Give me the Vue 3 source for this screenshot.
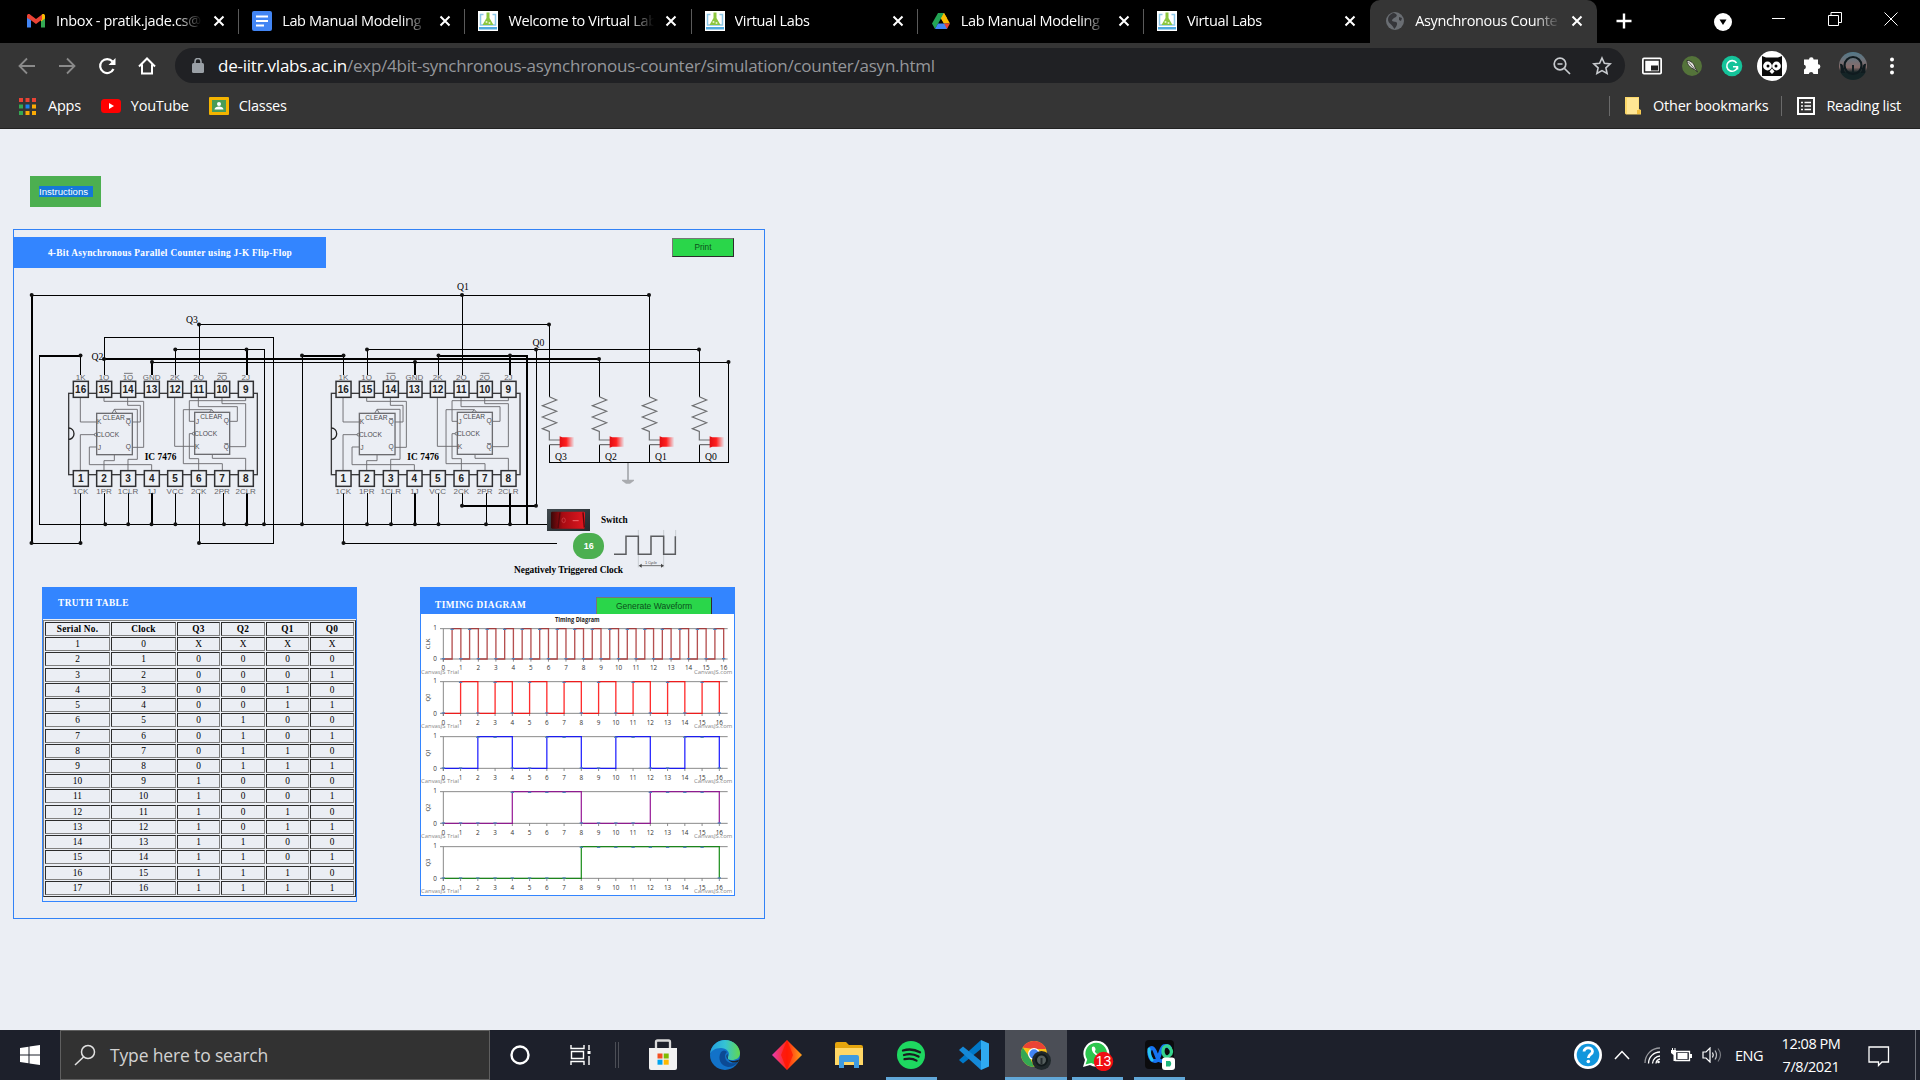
<script setup>
const tabs = [
  { title: 'Inbox - pratik.jade.cs@', icon: 'gmail' },
  { title: 'Lab Manual Modeling', icon: 'docs' },
  { title: 'Welcome to Virtual Lab', icon: 'vlabs' },
  { title: 'Virtual Labs', icon: 'vlabs' },
  { title: 'Lab Manual Modeling', icon: 'drive' },
  { title: 'Virtual Labs', icon: 'vlabs' },
  { title: 'Asynchronous Counte', icon: 'globe', active: true },
]

const head = ['Serial No.', 'Clock', 'Q3', 'Q2', 'Q1', 'Q0']
const rows = Array.from({ length: 17 }, (_, i) => {
  const bits = i === 0 ? ['X', 'X', 'X', 'X'] : (i - 1).toString(2).padStart(4, '0').split('')
  return [i + 1, i, ...bits]
})

const thin = [
  'M32 295.5H649.5V397', 'M32 543.5H80.5V493', 'M39.5 356V524.5H547', 'M80.5 356V375',
  'M104.5 375V337.5H273.5V543.5H199.5V493', 'M152 362.5H728.5V462.5H549.5V445',
  'M175.5 375V349.5H264.5V524.5', 'M199.5 375V324.5H549.5V397', 'M302.5 356V524.5', 'M343.5 356V375',
  'M367.5 375V349.5H699.5V397', 'M438.5 356V375', 'M462.5 295V375', 'M536.5 349V506', 'M462.5 493V506',
  'M343.5 493V543.5H557', 'M599.5 359V397', 'M599.5 445V462', 'M649.5 445V462', 'M699.5 445V462',
  'M104.5 493V524', 'M128.5 493V524', 'M175.5 493V524', 'M223.5 493V524',
  'M367.5 493V524', 'M391.5 493V524', 'M438.5 493V524', 'M486.5 493V524',
].join('')
const thick = [
  'M32 295V543', 'M39 356H80.5', 'M104 359H599.5', 'M152 362V375', 'M247 349V375', 'M302 356H343.5',
  'M415 362V375', 'M438 356H527V524', 'M510 356V375', 'M462 506H536.5',
  'M152 493V524', 'M247 493V524', 'M415 493V524', 'M510 493V524',
].join('')
const dots = [
  [31.7, 295], [31.5, 543], [80.5, 543], [199, 543], [80.5, 355.5], [199, 324.5], [104, 359], [152, 362],
  [175.3, 349.5], [246.5, 349.5], [302, 355.5], [343.5, 355.5], [367, 349.5], [343.5, 543], [462, 295],
  [549, 324.5], [536, 349.5], [438.5, 355.5], [510, 355.5], [415, 362], [462, 505.7], [536, 505.7],
  [649, 295], [699, 349.5], [599, 359], [728.5, 362],
  ...[105.3, 128.2, 151.5, 175.4, 224, 246.5, 264, 302, 367, 391, 415, 438.5, 486, 510].map(x => [x, 524.3]),
]
const wireLabels = [
  ['Q1', 457, 290], ['Q3', 186, 323], ['Q2', 91.5, 360], ['Q0', 532.5, 346],
  ['Q3', 555, 460], ['Q2', 605, 460], ['Q1', 655, 460], ['Q0', 705, 460],
]

const pinX = [242, 312, 384, 455, 525, 596, 666, 737]
const topPins = ['1K', '1Q', '1Q', 'GND', '2K', '2Q', '2Q', '2J']
const topBar = [0, 0, 1, 0, 0, 0, 1, 0]
const bottomPins = ['1CK', '1PR', '1CLR', '1J', 'VCC', '2CK', '2PR', '2CLR']
const chipText = [
  ['CLEAR', 341, 209], ['CLOCK', 323, 261], ['K', 298, 223], ['Q', 385, 222], ['J', 298, 299], ['Q', 385, 297],
  ['CLEAR', 634, 208], ['CLOCK', 617, 259], ['J', 592, 221], ['Q', 679, 220], ['K', 592, 297], ['Q', 679, 297],
]

const square = (step, period, top, bottom, end) => {
  let d = `M100 ${bottom}`
  let level = 0
  for (let t = period; t <= end; t += period) {
    d += `H${(100 + t * step).toFixed(1)}`
    level = 1 - level
    if (t < end || !level) d += `V${level ? top : bottom}`
  }
  return d
}
const charts = [
  { name: 'CLK', color: '#a52a2a', top: 146, bottom: 237, step: 52.56, period: 0.5 },
  { name: 'Q0', color: '#ff0000', top: 305, bottom: 400, step: 51.75, period: 1 },
  { name: 'Q1', color: '#0000ff', top: 470, bottom: 565, step: 51.75, period: 2 },
  { name: 'Q2', color: '#8b008b', top: 635, bottom: 730, step: 51.75, period: 4 },
  { name: 'Q3', color: '#008000', top: 800, bottom: 895, step: 51.75, period: 8 },
].map(c => {
  const marks = []
  const inc = c.period < 1 ? 0.5 : 1
  for (let t = 0; t <= 16; t += inc) {
    const high = Math.floor(t / c.period) % 2 === 1
    marks.push([100 + t * c.step, high ? c.top + 2 : c.bottom - 1])
  }
  return { ...c, d: square(c.step, c.period, c.top, c.bottom, 16), marks }
})
const ticks = Array.from({ length: 17 }, (_, i) => i)
</script>

<template>
  <div class="screen">
    <header class="tabs">
      <div v-for="(t, i) in tabs" :key="i" class="tab" :class="{ active: t.active, last: i === 5 }">
        <svg class="fav" viewBox="0 0 20 20">
          <g v-if="t.icon === 'gmail'">
            <path d="M1 5v11.5h4V9z" fill="#4285f4" /><path d="M19 5v11.5h-4V9z" fill="#34a853" />
            <path d="M15 5.500v5L19 7.500V5c0-2-2-2.500-3-1.500z" fill="#fbbc04" />
            <path d="M1 5c0-2 2-2.500 3-1.500l6 4.500 6-4.500v5L10 13 4 8.500 1 7z" fill="#ea4335" />
          </g>
          <g v-else-if="t.icon === 'docs'">
            <rect width="20" height="20" rx="2" fill="#4285f4" />
            <path d="M4 5.500h12M4 10h12M4 14.500h8" stroke="#fff" stroke-width="2" />
          </g>
          <g v-else-if="t.icon === 'vlabs'">
            <rect width="20" height="20" fill="#fff" />
            <path d="M5.500 3.500H2.500V14h15V3.500h-3" fill="none" stroke="#8cc7e8" stroke-width="1.500" />
            <path d="M1 16h18v2.500H1z" fill="#4fa8dc" />
            <path d="M8.500 1.500h3V7l4 7h-11l4-7z" fill="#8cc63f" /><circle cx="8.500" cy="11" r="1" fill="#e6f5c8" /><circle cx="11.500" cy="12" r="1" fill="#e6f5c8" />
          </g>
          <g v-else-if="t.icon === 'drive'">
            <path d="M7 2h6l6 10.500h-6z" fill="#fbbc04" /><path d="M7 2h6l-3 5.500L4 18 1 12.500z" fill="#23a455" />
            <path d="M4 18l3-5.500h8.500L16 18z" fill="#4285f4" /><path d="M10 7.500l3-5.500 3 5.200-3 5.300z" fill="#fbbc04" /><path d="M13 12.500h6L16 18z" fill="#ea4335" />
          </g>
          <g v-else>
            <circle cx="10" cy="10" r="9" fill="#6a6e73" />
            <path d="M9 2c3 1 4 3 1 4.500S6 10 8.500 10.500s4 .5 3.500 3-2 3-2.500 4.500C8 16 7 14 5 12.500S2.500 8 3.500 6 7 2 9 2zM14 6l3 1-1 3-2-1z" fill="#35363a" />
          </g>
        </svg>
        <span class="ttl">{{ t.title }}</span>
        <svg class="x" viewBox="0 0 12 12"><path d="M1.500 1.500l9 9M10.500 1.500l-9 9" stroke="#fff" stroke-width="2" /></svg>
      </div>
      <svg class="plus" viewBox="0 0 16 16"><path d="M8 .5v15M.5 8h15" stroke="#fff" stroke-width="2.400" /></svg>
      <div class="winctl">
        <svg width="18" height="18" viewBox="0 0 18 18" class="drop"><circle cx="9" cy="9" r="9" fill="#fff" /><path d="M5.500 6.500h7L9 12z" fill="#000" /></svg>
        <svg width="14" height="14" viewBox="0 0 14 14"><path d="M0 6.500h13" stroke="#fff" /></svg>
        <svg width="14" height="14" viewBox="0 0 14 14" fill="none" stroke="#fff"><path d="M.5 3.500h10v10H.5zM3 3V.5h10.500v10H11" /></svg>
        <svg width="14" height="14" viewBox="0 0 14 14"><path d="M.5.5l13 13M13.500.5l-13 13" stroke="#fff" /></svg>
      </div>
    </header>

    <div class="toolbar">
      <div class="nav">
        <svg width="18" height="18" viewBox="0 0 18 18" fill="none" stroke="#8a8a8a" stroke-width="1.800"><path d="M17 9H2M9 1.500L1.500 9 9 16.500" /></svg>
        <svg width="18" height="18" viewBox="0 0 18 18" fill="none" stroke="#8a8a8a" stroke-width="1.800"><path d="M1 9h15M9 1.500L16.500 9 9 16.500" /></svg>
        <svg width="18" height="18" viewBox="0 0 18 18" fill="none" stroke="#fff" stroke-width="2.200"><path d="M15.500 12A7 7 0 1 1 14.500 4.500" /><path d="M17.500 1v7h-7z" fill="#fff" stroke="none" /></svg>
        <svg width="18" height="18" viewBox="0 0 18 18" fill="none" stroke="#fff" stroke-width="2"><path d="M1 9.500L9 1.500l8 8M4 7.500v9h10v-9" /></svg>
      </div>
      <div class="omni">
        <svg class="lock" width="12" height="15" viewBox="0 0 12 15"><rect y="5" width="12" height="10" rx="1.500" fill="#9aa0a6" /><path d="M3 6V3.500a3 3 0 0 1 6 0V6" fill="none" stroke="#9aa0a6" stroke-width="1.600" /></svg>
        <span class="url">de-iitr.vlabs.ac.in<i>/exp/4bit-synchronous-asynchronous-counter/simulation/counter/asyn.html</i></span>
        <svg width="18" height="18" viewBox="0 0 18 18" fill="none" stroke="#c8cbcf" stroke-width="1.700"><circle cx="7" cy="7" r="5.800" /><path d="M4.500 7h5M11.500 11.500l5.500 5.500" /></svg>
        <svg width="20" height="20" viewBox="0 0 20 20" fill="none" stroke="#c8cbcf" stroke-width="1.600"><path d="M10 2l2.400 5.300 5.800.6-4.300 3.900 1.200 5.700L10 14.600l-5.100 2.900 1.200-5.700L1.800 7.900l5.800-.6z" /></svg>
      </div>
      <div class="ext">
        <svg width="22" height="20" viewBox="0 0 22 20"><rect x="1" y="1.500" width="20" height="17" rx="2" fill="#fff" /><path d="M3.500 4h15v12h-15z" fill="none" stroke="#222" stroke-width="1.500" /><path d="M10 9.500h7v5h-7z" fill="#222" /></svg>
        <svg width="22" height="22" viewBox="0 0 22 22"><circle cx="11" cy="11" r="10" fill="#54733a" /><path d="M6 5.500c4 0 7 3 8 7l2.500 4.500-3-2.500C9.500 13 6 9.500 6 5.500z" fill="#e8e8e0" stroke="#222" stroke-width=".8" /><path d="M7.500 7l6 7" stroke="#333" stroke-width=".7" /></svg>
        <svg width="22" height="22" viewBox="0 0 22 22"><circle cx="11" cy="11" r="10.300" fill="#15c39a" /><path d="M15.500 8a5.300 5.300 0 1 0 .8 3.800H12M16.500 14.500v-3" fill="none" stroke="#fff" stroke-width="1.600" /></svg>
        <svg width="30" height="30" viewBox="0 0 30 30"><circle cx="15" cy="15" r="15" fill="#fff" /><path d="M5 5l4 1.500h12L25 5v20H5z" fill="#0b0b0b" /><circle cx="10.500" cy="15" r="4.400" fill="#fff" /><circle cx="19.500" cy="15" r="4.400" fill="#fff" /><circle cx="11" cy="15" r="1.500" /><circle cx="19" cy="15" r="1.500" /><path d="M15 17.500l2.500 3L15 23l-2.500-2.500z" fill="#fff" /></svg>
        <svg width="20" height="20" viewBox="0 0 20 20"><path d="M7 3.500a2.300 2.300 0 0 1 4.600 0H16v4.700a2.400 2.400 0 0 1 0 4.800v5h-4.500a2.400 2.400 0 0 0-4.700 0H2v-4.600a2.400 2.400 0 0 0 0-4.700V3.500z" fill="#fff" /></svg>
        <svg width="28" height="28" viewBox="0 0 28 28"><defs><linearGradient id="sky" x2="0" y2="1"><stop stop-color="#52798a" /><stop offset=".55" stop-color="#866b69" /><stop offset=".72" stop-color="#142426" /></linearGradient></defs><circle cx="14" cy="14" r="14" fill="url(#sky)" /><circle cx="14" cy="13.500" r="8.500" fill="none" stroke="#101b1f" stroke-width="2.200" /><path d="M1 12c3-1 4 4 5 9H2zM27 12c-3-1-4 4-5 9h4z" fill="#101b1f" /><path d="M13 13h2v8h-2z" fill="#142024" /></svg>
        <svg width="6" height="18" viewBox="0 0 6 18" fill="#fff"><circle cx="3" cy="2.500" r="2" /><circle cx="3" cy="9" r="2" /><circle cx="3" cy="15.500" r="2" /></svg>
      </div>
    </div>

    <div class="bookmarks">
      <svg width="17" height="17" viewBox="0 0 17 17"><path d="M0 0h4v4H0zM6.500 0h4v4h-4zM13 0h4v4h-4z" fill="#ea4335" /><path d="M0 6.500h4v4H0zM0 13h4v4H0z" fill="#34a853" /><path d="M6.500 6.500h4v4h-4z" fill="#1a82f0" /><path d="M13 6.500h4v4h-4zM6.500 13h4v4h-4zM13 13h4v4h-4z" fill="#fbab05" /></svg>
      <span class="b1">Apps</span>
      <svg width="20" height="14" viewBox="0 0 20 14"><rect width="20" height="14" rx="3.500" fill="#f00" /><path d="M8 4v6l5-3z" fill="#fff" /></svg>
      <span class="b2">YouTube</span>
      <svg width="20" height="18" viewBox="0 0 20 18"><rect width="20" height="18" rx="1" fill="#f4b400" /><path d="M3 3h14v12H3z" fill="#4a9c58" /><circle cx="10" cy="7" r="2" fill="#fff" /><path d="M5.500 12.500c0-4 9-4 9 0z" fill="#fff" /></svg>
      <span class="b3">Classes</span>
      <div class="right">
        <i class="vr"></i>
        <svg width="16" height="18" viewBox="0 0 16 18"><path d="M0 0h14v12l2 1v4.500H1l-1-1z" fill="#fcd869" /><path d="M2 1h11.500v11L12 17H2z" fill="#ffe694" /><path d="M12 13h3.500v4H12z" fill="#f2bf3d" /></svg>
        <span class="b4">Other bookmarks</span>
        <i class="vr"></i>
        <svg width="18" height="18" viewBox="0 0 18 18"><path d="M1 1h16v16H1z" fill="none" stroke="#fff" stroke-width="2" /><path d="M4 5.500h2M4 9h2M4 12.500h2M7.500 5.500H14M7.500 9H14M7.500 12.500H14" stroke="#fff" stroke-width="1.500" /></svg>
        <span class="b5">Reading list</span>
      </div>
    </div>

    <main>
      <button class="instr"><span>Instructions</span></button>
      <section class="lab">
        <div class="labhead">
          <h1>4-Bit Asynchronous Parallel Counter using J-K Flip-Flop</h1>
          <button class="print">Print</button>
        </div>
        <svg class="circuit" width="750" height="318" viewBox="14 269 750 318">
          <defs>
            <linearGradient id="led"><stop stop-color="#e00d12" /><stop offset=".45" stop-color="#ff2020" /><stop offset="1" stop-color="#ff2020" stop-opacity="0" /></linearGradient>
            <linearGradient id="sw"><stop stop-color="#3a0808" /><stop offset=".35" stop-color="#a80b12" /><stop offset="1" stop-color="#e01720" /></linearGradient>
            <linearGradient id="case" x2="1" y2="1"><stop stop-color="#41494e" /><stop offset="1" stop-color="#22282c" /></linearGradient>
          </defs>
          <g fill="none" stroke="#000" shape-rendering="crispEdges"><path :d="thin" /><path :d="thick" stroke-width="2" /></g>
          <circle v-for="(p, i) in dots" :key="i" :cx="p[0]" :cy="p[1]" r="2" fill="#111" />
          <g v-for="off in [0, 262.700]" :key="off" :transform="`translate(${off} 350) scale(.33333)`" fill="none" stroke="#6c6c70" stroke-width="2.800">
            <rect x="206" y="130" width="566" height="244" stroke="#3a3a3c" stroke-width="4" />
            <path d="M206 234a16 17 0 0 1 0 34" stroke="#222" stroke-width="4" />
            <path d="M241 142V216H290M312 142V154H431V292H397M383 142V166H421V216H397M384 362V328H412V178H343L336 190M343 178l7 12M241 362V254H284M455 362V344H268V291H290M312 362V332H343V314" />
            <path d="M737 142V152H568V214H584M595 142V170H712V214H688M666 142V161H737V290H688M524 142V289H584M596 362V326H568V251H578M667 362V341H550V179H635L628 187M635 179l7 8M737 362V325H637V314" />
            <circle cx="287" cy="254" r="4" /><circle cx="581" cy="251" r="4" />
            <rect x="290" y="190" width="107" height="124" stroke-width="4" /><rect x="584" y="187" width="105" height="126" stroke-width="4" />
            <path d="M379 206h12M673 281h12" />
            <template v-for="(x, i) in pinX" :key="x">
              <rect :x="x - 22" y="94" width="45" height="48" fill="#eceff4" stroke="#303033" stroke-width="4.500" />
              <rect :x="x - 22" y="362" width="45" height="47" fill="#eceff4" stroke="#303033" stroke-width="4.500" />
              <g stroke="none" text-anchor="middle" class="arial">
                <text :x="x" y="128" class="num">{{ 16 - i }}</text><text :x="x" y="397" class="num">{{ i + 1 }}</text>
                <text :x="x" y="89" class="lbl">{{ topPins[i] }}</text><text :x="x" y="432" class="lbl">{{ bottomPins[i] }}</text>
              </g>
              <path v-if="topBar[i]" :d="`M${x - 12} 70h26`" />
            </template>
            <g stroke="none" class="arial in" text-anchor="middle"><text v-for="(c, i) in chipText" :key="i" :x="c[1]" :y="c[2]">{{ c[0] }}</text></g>
            <text x="434" y="330" textLength="95" stroke="none" class="ic">IC 7476</text>
          </g>
          <text v-for="(l, i) in wireLabels" :key="'w' + i" :x="l[1]" :y="l[2]" class="q">{{ l[0] }}</text>
          <g transform="translate(520 220) scale(.33333)">
            <g v-for="k in 4" :key="k" :transform="`translate(${(k - 1) * 150} 0)`">
              <path d="M88 530L110 540L67 557L110 574L67 591L110 608L67 626L88 634V660H120M88 674H122" fill="none" stroke="#6f7072" stroke-width="3.500" />
              <path d="M119 649l8 3h36v28h-36l-8 3z" fill="url(#led)" />
            </g>
            <path d="M324 729V780" stroke="#b0b3b8" stroke-width="6" /><path d="M306 779h36v3l-12 9h-12l-12-9z" fill="#a9abaf" />
            <rect x="81" y="867" width="129" height="66" fill="url(#case)" /><rect x="93" y="875" width="102" height="51" rx="4" fill="url(#sw)" />
            <path d="M120 877l-6 47M189 877l4 46" stroke="#55080c" stroke-width="4" /><ellipse cx="131" cy="901" rx="5" ry="7" fill="none" stroke="#d34b50" stroke-width="2" /><path d="M158 902h18" stroke="#f06a6c" stroke-width="3" />
            <text x="243" y="908" textLength="80" lengthAdjust="spacingAndGlyphs" class="bold">Switch</text>
            <rect x="159" y="939" width="93" height="78" rx="38" fill="#4caf50" />
            <text x="206" y="988" text-anchor="middle" class="sixteen">16</text>
            <path d="M355 930V1042M431 930V1042M467 930V950" stroke="#c3c6cb" stroke-width="2.500" />
            <path d="M282 1003H318V949H355V1003H393V949H431V1003H466V949" fill="none" stroke="#5b5c5f" stroke-width="4.500" />
            <path d="M360 1037h68" stroke="#555" stroke-width="2.500" /><path d="M356 1037l9-6v12zM432 1037l-9-6v12z" fill="#444" />
            <text x="393" y="1031" text-anchor="middle" textLength="36" class="tiny">1 Cycle</text>
            <text x="-18" y="1058" textLength="327" lengthAdjust="spacingAndGlyphs" class="bold">Negatively Triggered Clock</text>
          </g>
        </svg>
        <div class="panels">
          <div class="truth">
            <h2>TRUTH TABLE</h2>
            <div class="grid">
              <b v-for="h in head" :key="h">{{ h }}</b>
              <template v-for="(r, i) in rows" :key="i"><span v-for="(c, j) in r" :key="j">{{ c }}</span></template>
            </div>
          </div>
          <div class="timing">
            <div class="thead"><h2>TIMING DIAGRAM</h2><button>Generate Waveform</button></div>
            <svg width="313" height="281" viewBox="33 102 939 843" class="wave">
              <text x="435" y="127" textLength="134" lengthAdjust="spacingAndGlyphs" class="ct">Timing Diagram</text>
              <g v-for="c in charts" :key="c.name">
                <path :d="`M90 ${c.top}H953M90 ${c.bottom}H953M100 ${c.top}V${c.bottom + 8}`" stroke="#8a8a8a" stroke-width="3" />
                <path v-for="t in ticks" :key="t" :d="`M${100 + t * c.step} ${c.bottom}v8`" stroke="#777" stroke-width="2.500" />
                <path :d="c.d" fill="none" :stroke="c.color" stroke-opacity=".82" stroke-width="4" />
                <path v-for="(m, i) in c.marks" :key="'m' + i" :d="`M${m[0] - 5} ${m[1]}h10`" stroke="#4f81bc" stroke-width="4" />
                <text x="75" :y="c.top + 5" text-anchor="middle">1</text><text x="75" :y="c.bottom + 7" text-anchor="middle">0</text>
                <text v-for="t in ticks" :key="'t' + t" :x="100 + t * c.step" :y="c.bottom + 34" text-anchor="middle">{{ t }}</text>
                <text :transform="`translate(59 ${(c.top + c.bottom) / 2}) rotate(-90)`" text-anchor="middle" class="an">{{ c.name }}</text>
                <text x="33" :y="c.bottom + 44" textLength="114" lengthAdjust="spacingAndGlyphs" class="cr">CanvasJS Trial</text>
                <text x="852" :y="c.bottom + 44" textLength="115" lengthAdjust="spacingAndGlyphs" class="cr">CanvasJS.com</text>
              </g>
            </svg>
          </div>
        </div>
      </section>
    </main>

    <footer>
      <div class="start"><svg width="20" height="20" viewBox="0 0 20 20" fill="#fff"><path d="M0 3l8.500-1.300V9.500H0zM9.500 1.500L20 0v9.500H9.500zM0 10.500h8.500v7.800L0 17zM9.500 10.500H20V20L9.500 18.500z" /></svg></div>
      <div class="search"><svg width="22" height="22" viewBox="0 0 22 22" fill="none" stroke="#e2e2e2" stroke-width="1.500"><circle cx="14" cy="8" r="6.500" /><path d="M9.500 13L1 21" /></svg><span>Type here to search</span></div>
      <div class="slot c1"><svg width="20" height="20" viewBox="0 0 20 20"><circle cx="10" cy="10" r="8.500" fill="none" stroke="#fff" stroke-width="2.400" /></svg></div>
      <div class="slot c2"><svg width="22" height="20" viewBox="0 0 22 20" fill="none" stroke="#fff" stroke-width="1.400"><path d="M1 0v3.500h13V0M1 20v-3.500h13V20M1.500 6.500h12v7h-12zM19 0v5M19 11v9" /><path d="M17.500 6h3v3h-3z" fill="#fff" stroke="none" /></svg></div>
      <div class="dv"></div>
      <div class="slot"><svg width="30" height="32" viewBox="0 0 30 32"><path d="M8 9V3q0-1.500 1.500-1.500h11Q22 1.500 22 3v6" fill="none" stroke="#d9d9d9" stroke-width="2.300" /><path d="M1 9h28v20q0 2-2 2H3q-2 0-2-2z" fill="#f1f1f1" /><path d="M9.500 14.500h5v5h-5z" fill="#f25022" /><path d="M15.700 14.500h5v5h-5z" fill="#7fba00" /><path d="M9.500 20.700h5v5h-5z" fill="#00a4ef" /><path d="M15.700 20.700h5v5h-5z" fill="#ffb900" /></svg></div>
      <div class="slot"><svg width="30" height="30" viewBox="0 0 30 30"><defs><linearGradient id="eg" x2="1"><stop stop-color="#239fe0" /><stop offset=".5" stop-color="#35c3d5" /><stop offset="1" stop-color="#62d84e" /></linearGradient></defs><circle cx="15" cy="15" r="15" fill="#1272c8" /><path d="M0 14C1 5 8 0 15 0c9 0 15 7 15 13 0 5-4 7-8 7-3 0-5-1-4-3 3-5-2-9-7-9C5 8 1 11 0 14z" fill="url(#eg)" /><path d="M11 12c-4 7 0 14 7 15 4 0 8-2 10-5-5 3-13 1-13-6 0-2 1-3 2-4-2-2-4-2-6 0z" fill="#0c4a94" /><path d="M17.500 14c-2 2-1 6 4.500 7 3 0 6-.5 7.500-2L28 22c-6 2-11.500-1-10.500-8z" fill="#1d2029" /></svg></div>
      <div class="slot"><svg width="30" height="30" viewBox="0 0 30 30"><defs><linearGradient id="dm"><stop stop-color="#e83cb0" /><stop offset=".5" stop-color="#ff2a12" /><stop offset="1" stop-color="#ffa21a" /></linearGradient></defs><path d="M15 0l15 15-15 15L0 15z" fill="url(#dm)" /><path d="M15 0l6 15-6 15L9 15z" fill="#ff1200" opacity=".7" /></svg></div>
      <div class="slot"><svg width="28" height="26" viewBox="0 0 28 26"><path d="M0 2q0-2 2-2h9l3 3h12q2 0 2 2v5H0z" fill="#e5a50d" /><path d="M0 6h28v17H0z" fill="#ffd766" /><path d="M4 26V15q0-2 2-2h16q2 0 2 2v11h-5v-6H9v6z" fill="#3f9be0" /></svg></div>
      <div class="slot"><svg width="28" height="28" viewBox="0 0 28 28"><circle cx="14" cy="14" r="14" fill="#1ed760" /><path d="M6 9.500c6-1.800 12-1 17 1.700M7 14c5-1.500 10-1 14.500 1.600M7.500 18.200c4.500-1.200 8.500-.8 12 1.400" fill="none" stroke="#191c20" stroke-width="2.300" stroke-linecap="round" /></svg><i class="ul"></i></div>
      <div class="slot"><svg width="30" height="30" viewBox="0 0 30 30"><path d="M22 0v9L4 23.500 0 20z" fill="#0078c8" /><path d="M22 30v-9L4 6.500 0 10z" fill="#1589d8" /><path d="M22 0l8 3.500v23L22 30z" fill="#2faaf1" /></svg></div>
      <div class="slot hl"><svg width="32" height="30" viewBox="0 0 32 30"><circle cx="14" cy="14" r="13" fill="#fbc116" /><path d="M2.700 7.500A13 13 0 0 1 26 9H14z" fill="#ea4335" /><path d="M2.700 7.500L10 18l4 9A13 13 0 0 1 2.700 7.500z" fill="#34a853" /><circle cx="14" cy="14" r="6" fill="#fff" /><circle cx="14" cy="14" r="4.700" fill="#4285f4" /><circle cx="21.500" cy="20.500" r="9.500" fill="#20292c" /><circle cx="21.500" cy="20" r="5.500" fill="#56605f" stroke="#11191b" stroke-width="2" /><path d="M20.500 18h2v6h-2z" fill="#252c2e" /></svg><i class="ul"></i></div>
      <div class="slot"><svg width="32" height="32" viewBox="0 0 32 32"><path d="M1 28l2-7a13 13 0 1 1 5 5z" fill="#fff" /><path d="M3.500 25.500l1.700-5a10.800 10.800 0 1 1 4 3.600z" fill="#2cc64e" /><path d="M10 8c2-1.500 3 0 3.500 2s-1.500 1.500 0 3.500 3 1.500 4 .5 4 .5 3.500 2c-1 5-13-1-11-8z" fill="#fff" /><circle cx="21.500" cy="22.500" r="9.700" fill="#f00d12" /><text x="21.500" y="27.300" text-anchor="middle" class="badge">13</text></svg><i class="ul"></i></div>
      <div class="slot"><svg width="30" height="30" viewBox="0 0 30 30"><rect width="29" height="29" rx="4" fill="#0b0b0d" /><path d="M17 21c-6 1-6-13-10-13-5 0-3 13 3 13 5 0 5-14 9-15 3-.5 5 0 6 2" fill="none" stroke="#1573f2" stroke-width="3.800" stroke-linecap="round" /><path d="M25 8c-2-4-7-2-7 3s3 7 6 5 3-5 1-8z" fill="none" stroke="#36d48d" stroke-width="3.200" /><path d="M4 9c0 5 1 8 3 11" stroke="#29c5ee" fill="none" stroke-width="3" stroke-linecap="round" /><rect x="17" y="17.500" width="13" height="12.500" rx="3" fill="#fff" /><path d="M21 21h4q2.500 2.500 0 5.500h-4z" fill="#1eb57c" /></svg><i class="ul"></i></div>
      <div class="tray">
        <svg width="28" height="28" viewBox="0 0 28 28"><circle cx="14" cy="14" r="14" fill="#fff" /><circle cx="14" cy="14" r="11.300" fill="#1296dc" /><path d="M10 10.500c0-5 8.500-4.500 8.500 0 0 3-4.200 3-4.200 6.500" fill="none" stroke="#fff" stroke-width="2.800" /><circle cx="14.300" cy="20.500" r="1.800" fill="#fff" /></svg>
        <svg width="16" height="10" viewBox="0 0 16 10"><path d="M1 9l7-7.500L15 9" fill="none" stroke="#fff" stroke-width="1.500" /></svg>
        <svg width="17" height="17" viewBox="0 0 17 17" fill="none" stroke="#fff" stroke-width="1.300"><path d="M1 16A15 15 0 0 1 16 1" opacity=".55" /><path d="M4.500 16.500A11.500 11.500 0 0 1 16 5M8.500 16.500A8 8 0 0 1 16 9" /><path d="M12 16.500a5 5 0 0 1 4-4.500" /><circle cx="14.500" cy="15" r="1.300" fill="#fff" stroke="none" /></svg>
        <svg width="21" height="14" viewBox="0 0 21 14"><path d="M4.500 3.500h14v9h-14z" fill="none" stroke="#fff" stroke-width="1.300" /><path d="M6.500 5h10v6h-10zM19 6h2v4h-2zM0 2h5v3L4 7v6H2.500V7L0 5zM1 0h1v2H1zM3.500 0h1v2h-1z" fill="#fff" /></svg>
        <svg width="21" height="16" viewBox="0 0 21 16" fill="none" stroke="#fff" stroke-width="1.200"><path d="M1 5h3l4-4v14l-4-4H1z" /><path d="M10.500 5.500q1.500 2.500 0 5" /><path d="M13 3.500q3 4.500 0 9" opacity=".7" /><path d="M16 1.500q5 6.500 0 13" opacity=".4" /></svg>
        <span class="eng">ENG</span>
        <div class="clock"><span>12:08 PM</span><span>7/8/2021</span></div>
        <svg class="note" width="22" height="21" viewBox="0 0 22 21"><path d="M1 1h19.500v15H14l-3.500 3.500V16H1z" fill="none" stroke="#fff" stroke-width="1.300" /></svg>
        <i class="edge"></i>
      </div>
    </footer>
  </div>
</template>

<style>
body { margin: 0; overflow: hidden; }
</style>
<style scoped>
* { box-sizing: border-box; }
svg { display: block; flex: none; }
h1, h2 { margin: 0; }
.screen { width: 1920px; height: 1080px; display: flex; flex-direction: column; background: #ebeef4; font-family: "Open Sans", "Noto Sans", sans-serif; color: #fff; overflow: hidden; }
.tabs { height: 43px; background: #000; display: flex; padding-left: 13px; flex: none; }
.tab { width: 226.200px; flex: none; display: flex; align-items: center; padding: 0 13px 2px 13px; position: relative; font-size: 14.500px; letter-spacing: -.35px; }
.tab::after { content: ''; position: absolute; right: 0; top: 9px; height: 25px; width: 1px; background: #5a5a5a; }
.tab.active { background: #353535; border-radius: 10px 10px 0 0; width: 227px; padding-left: 15px; }
.tab.active::after, .tab.last::after { display: none; }
.fav { width: 20px; height: 20px; margin-right: 10px; }
.ttl { width: 146px; overflow: hidden; white-space: nowrap; -webkit-mask-image: linear-gradient(90deg, #000 82%, transparent); mask-image: linear-gradient(90deg, #000 82%, transparent); }
.active .ttl { width: 145px; }
.x { width: 12px; height: 12px; margin-left: 11px; }
.plus { width: 16px; height: 16px; margin: 13px 0 0 19px; }
.winctl { margin-left: auto; display: flex; align-items: center; padding: 0 22px 5px 0; gap: 42px; }
.drop { margin: 6px -2px 0 0; }
.toolbar { height: 45px; background: #353535; display: flex; align-items: center; flex: none; }
.nav { display: flex; gap: 22px; padding-left: 18px; width: 175px; }
.omni { width: 1450px; height: 35px; border-radius: 18px; background: #202124; display: flex; align-items: center; padding: 0 13px 0 17px; }
.url { margin: 0 auto 1px 14px; font-size: 17px; letter-spacing: -.235px; }
.url i { font-style: normal; color: #95979b; }
.omni svg + svg { margin-left: 21px; }
.ext { flex: 1; display: flex; align-items: center; padding: 0 0 0 16px; }
.ext svg { margin-right: 18px; }
.ext svg:nth-child(3) { margin-right: 14px; }
.ext svg:nth-child(4) { margin-right: 15px; }
.ext svg:nth-child(5) { margin-right: 17px; }
.ext svg:nth-child(6) { margin-right: 22px; }
.bookmarks { height: 41px; background: #353535; border-bottom: 1px solid #222; display: flex; align-items: center; padding: 0 19px 4px 19px; flex: none; font-size: 14.500px; letter-spacing: -.25px; }
.bookmarks span { white-space: nowrap; margin-bottom: 1px; }
.bookmarks .b1 { margin-right: 20px; margin-left: 12px; }
.bookmarks .b2 { margin-right: 20px; margin-left: 10px; }
.bookmarks .b3 { margin-left: 10px; }
.right { margin-left: auto; display: flex; align-items: center; }
.vr { width: 1px; height: 20px; background: #6a6a6a; }
.right svg { margin-left: 15px; }
.bookmarks .b4 { margin-right: 13px; margin-left: 12px; }
.bookmarks .b5 { margin-left: 11px; }

main { flex: 1; padding: 47px 0 0 13px; min-height: 0; }
button { display: block; margin: 0; padding: 0; font-family: "Liberation Sans", Arial, sans-serif; }
.instr { width: 71px; height: 31px; margin-left: 17px; border: 0; background: #4caf50; display: flex; align-items: center; justify-content: center; }
.instr span { background: #1478d7; color: #fff; font-size: 9.600px; line-height: 11px; width: 54px; text-align: left; white-space: nowrap; margin-left: 1px; }
.lab { width: 752px; height: 690px; margin-top: 22px; border: 1px solid #3282f6; }
.labhead { display: flex; justify-content: space-between; height: 39px; padding: 7px 30px 0 0; align-items: flex-start; }
h1 { width: 312px; height: 31px; background: #3385ff; font: bold 9.330px/33px "Liberation Serif", serif; letter-spacing: .3px; text-align: center; white-space: nowrap; }
.print { width: 62px; height: 19px; margin-top: 1px; background: #2ad64a; border: 1px solid; border-color: #767676 #2c2c2c #2c2c2c #767676; font-size: 8.200px; color: #0b4f1b; }
.circuit { width: 750px; height: 318px; }
.arial { font-family: "Liberation Sans", Arial, sans-serif; }
.num { font-weight: bold; font-size: 30px; fill: #222; }
.lbl { font-size: 24px; fill: #66666a; }
.in { font-size: 20px; fill: #4c4c50; }
.ic { font: bold 28px "Liberation Serif", serif; fill: #000; }
.q { font: 9.700px "Liberation Serif", serif; fill: #000; }
.bold { font: bold 28px "Liberation Serif", serif; }
.sixteen { font: bold 27px "Liberation Sans", sans-serif; fill: #fff; }
.tiny { font: 12px "Liberation Sans", sans-serif; fill: #555; }
.panels { display: flex; padding-left: 28px; gap: 63px; align-items: flex-start; }
.truth { width: 315px; height: 315px; border: 1px solid #3385ff; }
h2 { font: bold 9.330px "Liberation Serif", serif; letter-spacing: .42px; white-space: nowrap; }
.truth h2 { height: 31px; background: #3385ff; padding: 10px 0 0 15px; }
.grid { margin: 1px 0 0 0; height: 277px; border: 1px solid; border-color: #808080 #2c2c2c #2c2c2c #808080; padding: 1px 1px 0; display: grid; grid-template-columns: 65px 65px 43px 44px 43px 44px; gap: 1.230px 1px; grid-auto-rows: 14px; font: 9.330px/12px "Liberation Serif", serif; color: #000; text-align: center; }
.grid > b { letter-spacing: .2px; }
.grid > * { border: 1px solid; border-color: #2c2c2c #808080 #808080 #2c2c2c; }
.timing { width: 315px; height: 309px; border: 1px solid #3385ff; background: #fff; }
.thead { background: #3385ff; height: 26px; display: flex; align-items: flex-start; overflow: hidden; padding-left: 14px; }
.timing h2 { padding-top: 12px; width: 161px; }
.timing button { margin-top: 9px; width: 116px; height: 19px; border: 1px solid; border-color: #767676 #2c2c2c #2c2c2c #767676; background: #2ad64a; font-size: 8.500px; line-height: 15px; color: #0b4f1b; white-space: nowrap; }
.wave { font: 19px "Open Sans", sans-serif; fill: #333; }
.ct { font: bold 21px "Open Sans", sans-serif; fill: #222; }
.cr { font-size: 18px; fill: #888; }
.an { font-size: 18px; }

footer { height: 50px; flex: none; background: #1d202b; display: flex; align-items: stretch; }
.start { width: 60px; display: flex; align-items: center; justify-content: center; }
.search { width: 430px; background: #323232; border: 1px solid #5f5f5f; display: flex; align-items: center; padding: 0 0 0 13px; font-size: 17.500px; letter-spacing: -.15px; color: #d2d2d2; }
.search span { margin-left: 14px; }
.slot { width: 62.100px; display: flex; align-items: center; justify-content: center; position: relative; flex: none; }
.c1 { width: 60px; }
.c2 { width: 61px; }
.dv { width: 4px; height: 26px; margin: 12px 13px 0 4px; border: solid #4c4e56; border-width: 0 1px; }
.ul { position: absolute; bottom: 0; left: 5.500px; right: 5.500px; height: 3px; background: #61a7d8; }
.hl { background: #4b4e56; }
.hl .ul { left: 0; right: 0; }
.badge { font: 14px "Liberation Sans", sans-serif; fill: #fff; }
.tray { margin-left: auto; display: flex; align-items: center; font-size: 14.500px; letter-spacing: -.45px; }
.tray svg { margin-right: 10px; }
.tray svg:first-child { margin-right: 12px; }
.tray svg:nth-child(2) { margin-right: 14px; }
.eng { margin-left: 2px; width: 33px; }
.clock { width: 84px; display: flex; flex-direction: column; text-align: center; line-height: 23px; margin-left: 1px; margin-right: 15px; }
.tray .note { margin: 2px 25px 0 0; }
.edge { width: 1px; height: 50px; background: #70737b; margin-right: 4px; }
</style>
